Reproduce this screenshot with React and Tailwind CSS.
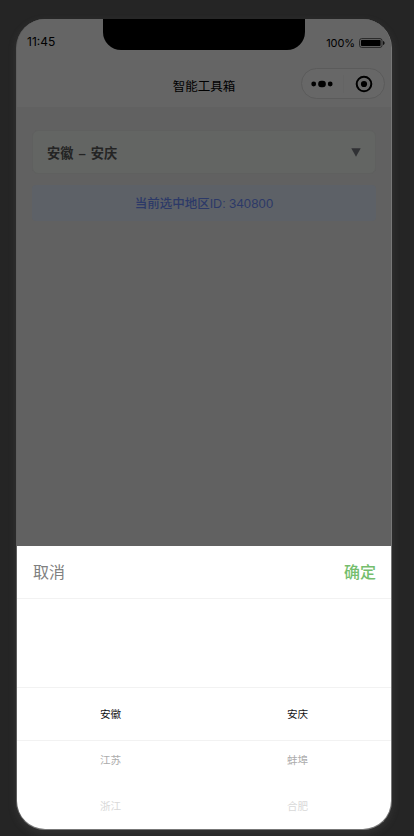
import React, {useState} from 'react';

const provinces = ['安徽', '江苏', '浙江'];
const cities = ['安庆', '蚌埠', '合肥'];
const rowColors = ['text-[#111111]', 'text-[#acacac]', 'text-[#d9d9d9]'];

const StatusBar = () => (
  <div className="relative flex h-[45px] shrink-0 items-start justify-between bg-[#656565] pl-[10px] pr-[6px] pt-[15px] text-black">
    <span className="font-[Inter] text-[12px] leading-4">11:45</span>
    <div className="absolute left-[86px] top-0 h-[31px] w-[202px] rounded-b-[18px] bg-black" />
    <div className="flex items-center gap-[4px] pt-[1px]">
      <span className="font-[Inter] text-[11px] leading-4 tracking-[-0.1px]">100%</span>
      <svg width="26" height="10" viewBox="0 0 26 10">
        <rect x="0.6" y="0.6" width="22.4" height="8.8" rx="2" fill="none" stroke="#262626" />
        <rect x="2" y="2" width="19.6" height="6" rx="0.8" fill="#000" />
        <path d="M24 3v4c1-.3 1.6-1 1.6-2s-.6-1.7-1.6-2z" fill="#111" />
      </svg>
    </div>
  </div>
);

const NavBar = () => (
  <div className="relative flex h-[43px] shrink-0 items-center justify-center bg-[#656565]">
    <h1 className="pt-[3px] text-[12.5px] text-black">智能工具箱</h1>
    <div className="absolute right-[6px] top-[4px] flex h-[31px] w-[84px] items-center rounded-full border border-[#5b5b5b] bg-[#676767]">
      <button className="flex flex-1 justify-center" aria-label="more">
        <svg width="22" height="8" viewBox="0 0 22 8" fill="#000">
          <circle cx="2.7" cy="4" r="2.4" />
          <rect x="7.2" y="0.8" width="7.6" height="6.4" rx="3" />
          <circle cx="19.2" cy="4" r="2.4" />
        </svg>
      </button>
      <span className="h-[18px] w-px bg-[#646464]" />
      <button className="flex flex-1 justify-center" aria-label="close">
        <svg width="18" height="18" viewBox="0 0 18 18">
          <circle cx="9" cy="9" r="7.3" fill="none" stroke="#000" strokeWidth="2" />
          <circle cx="9" cy="9" r="3.1" fill="#000" />
        </svg>
      </button>
    </div>
  </div>
);

const PickerColumn = ({items}) => (
  <ul className="flex-1 text-center text-[10.6px]">
    {items.map((item, i) => (
      <li key={item} className={`flex h-[46px] items-center justify-center ${rowColors[i]}`}>
        {item}
      </li>
    ))}
  </ul>
);

const RegionPicker = () => (
  <div className="flex h-[283px] shrink-0 flex-col bg-white">
    <div className="flex h-[53px] shrink-0 items-center justify-between border-b border-[#f2f2f2] pl-4 pr-[15px] text-[16px]">
      <button className="text-[#808080]">取消</button>
      <button className="font-medium text-[#75be6d]">确定</button>
    </div>
    <div className="relative flex flex-1 overflow-hidden pt-[93px]">
      <div className="absolute inset-x-0 top-[88px] h-[54px] border-y border-[#f2f2f2]" />
      <PickerColumn items={provinces} />
      <PickerColumn items={cities} />
    </div>
  </div>
);

const App = () => {
  const [region] = useState({province: '安徽', city: '安庆', id: '340800'});

  return (
    <div className="h-[836px] w-[414px] overflow-hidden bg-[#252525] pl-4 pt-[19px] font-['Inter','Noto_Sans_CJK_SC',sans-serif]">
      <div className="flex h-[811px] w-[376px] flex-col overflow-hidden rounded-[29px] border border-t-0 border-[#777777] border-l-[#5e5e5e] bg-[#616161] shadow-[0_3px_9px_rgba(120,120,120,0.18)]">
        <StatusBar />
        <NavBar />
        <div className="flex flex-1 flex-col gap-[11px] px-[15px] pt-[23px]">
          <div className="flex h-[44px] items-center justify-between rounded-[6px] border border-[#5f605f] bg-[#636563] px-[14px] text-[#242424]">
            <span className="pt-[3px] font-['Liberation_Sans','Noto_Sans_CJK_SC',sans-serif] text-[13.2px] font-bold [word-spacing:1.4px]">
              {region.province} – {region.city}
            </span>
            <svg width="10" height="9" viewBox="0 0 10 9" className="mt-px">
              <path d="M0.3 0.3h9.4L5 8.7z" fill="#303134" />
            </svg>
          </div>
          <div className="flex h-[36px] items-center justify-center rounded-[4px] bg-[#5d6167] pt-[2px] font-['Liberation_Sans','Noto_Sans_CJK_SC',sans-serif] text-[12.5px] font-medium text-[#2c3968]">
            <span className="whitespace-pre">当前选中地区ID: </span>
            <span className="text-[13px] tracking-[0.15px]">{region.id}</span>
          </div>
        </div>
        <RegionPicker />
      </div>
    </div>
  );
};

export default App;
